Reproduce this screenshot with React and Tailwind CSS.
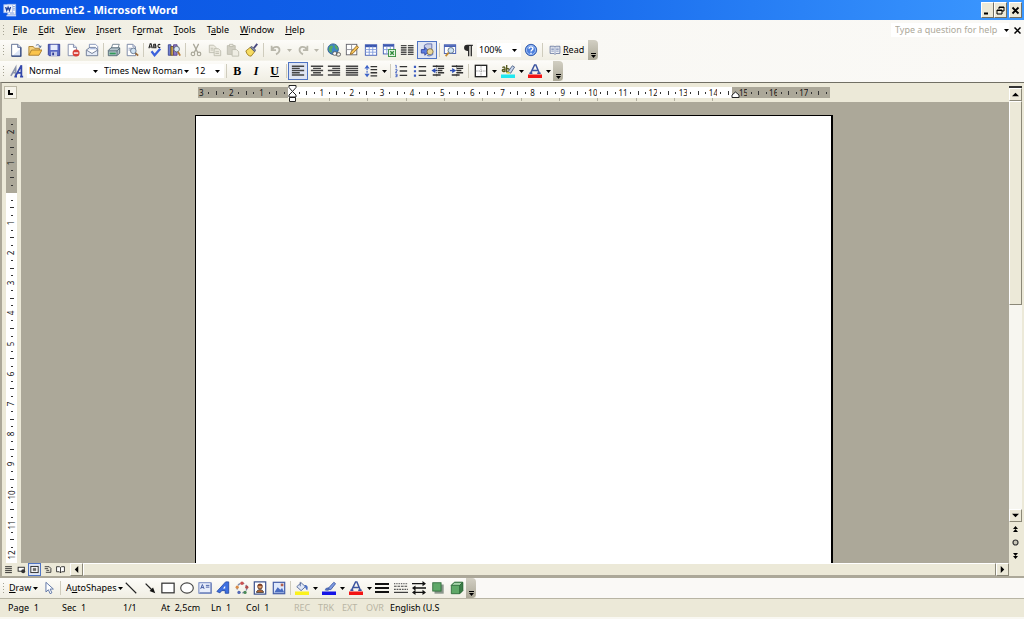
import clsx from 'clsx';

const G = '#a9a799';
const B = '#3a56b0';

const icons = {
  word: (
    <>
      <rect x="5.5" y="1.5" width="9" height="12" fill="#fff" stroke="#9db7ea" />
      <path d="M11.500 4h2M11.500 6h2M11.500 8h2M8 11.500h5" stroke="#6f8fd0" />
      <rect x="1" y="2" width="10" height="9" fill="#f2f6fe" stroke="#a9c1f0" />
      <path d="M3 4.500l1.300 4 1.500-3.600 1.500 3.600 1.400-4" fill="none" stroke="#1d3f9c" strokeWidth="1.500" />
      <path d="M4 14.500h11" stroke="#cfdcf7" strokeWidth="1.500" />
    </>
  ),
  newDoc: (
    <>
      <path d="M3 1.500h7l3.500 3.500v10H3z" fill="#fff" stroke="#53638c" />
      <path d="M4 14.500l9-8v8z" fill="#dce5f6" />
      <path d="M10 1.500V5h3.500" fill="#cdd8ee" stroke="#53638c" />
      <path d="M13.500 5v10H3" fill="none" stroke="#2f4680" strokeWidth="1.400" />
    </>
  ),
  open: (
    <>
      <path d="M1 14V4h5l1.500 2H13v3" fill="#f6d27a" stroke="#a6792a" />
      <path d="M1 14l3-6h12l-3.500 6z" fill="#fbc44b" stroke="#a6792a" />
      <path d="M9 3c2-2 4-1 5 1.500M12.300 4.200l2 .8.600-2" fill="none" stroke="#3d5a8f" />
    </>
  ),
  save: (
    <>
      <path d="M1.500 1.500h13v13h-12l-1-1z" fill="#5868c4" stroke="#2f3a94" />
      <rect x="4" y="2" width="8" height="6" fill="#e8edfb" />
      <rect x="4.500" y="10" width="7" height="5" fill="#c3c9e6" />
      <rect x="6" y="11" width="2" height="3" fill="#2f3a94" />
    </>
  ),
  permission: (
    <>
      <path d="M2.500 1.500h6L12 5v9.500H2.500z" fill="#fff" stroke="#7b87a6" />
      <path d="M8.500 1.500V5H12" fill="#dbe2f2" stroke="#7b87a6" />
      <circle cx="11.500" cy="11.500" r="4" fill="#d8403a" />
      <path d="M9 11.500h5" stroke="#fff" strokeWidth="1.600" />
    </>
  ),
  mail: (
    <>
      <path d="M5 1.500h7l2.500 2.500v6H5z" fill="#fff" stroke="#7d8db5" />
      <path d="M1.500 8l4-3h6.500l2.500 3v6.500h-13z" fill="#e5ebf7" stroke="#66748f" />
      <path d="M1.500 8l6.500 4 6.500-4" fill="#fff" stroke="#66748f" />
      <path d="M6 6h6" stroke="#8fa3d0" />
    </>
  ),
  print: (
    <>
      <path d="M5 6l1.500-4.500H14L12.500 6z" fill="#fff" stroke="#6c7e8c" />
      <path d="M1.500 8.500l3-3h10v6l-3 3h-10z" fill="#b7c6cc" stroke="#4d6370" />
      <path d="M1.500 9h10l3-3M11.500 9v5" fill="none" stroke="#4d6370" />
      <path d="M3 12h7" stroke="#2f9a58" strokeWidth="2" />
    </>
  ),
  preview: (
    <>
      <path d="M2.500 1.500h6.500L12 4.500v10H2.500z" fill="#fff" stroke="#6f7e9e" />
      <path d="M9 1.500v3h3M4 6h4M4 8h3" fill="none" stroke="#8a98b8" />
      <circle cx="9.500" cy="9" r="3.200" fill="#cfe2f2" stroke="#64738a" />
      <path d="M12 11.500l3 3" stroke="#9a6b3a" strokeWidth="2" />
    </>
  ),
  spelling: (
    <>
      <path d="M1 6l1.500-5h1L5 6M1.500 4.500h3M6.500 1v5M6.500 1.500h2v2h-2M6.500 3.500h2.500v2H6.500M14 2c-3-2-4 4 0 3" fill="none" stroke="#222" strokeWidth="1.200" />
      <path d="M4 9.500l3.500 4.500L14 6.500" fill="none" stroke="#3c62dc" strokeWidth="2.600" />
    </>
  ),
  research: (
    <>
      <path d="M1.500 2h3v12h-3z" fill="#6f7fd2" stroke="#3b4690" />
      <path d="M4.500 4h3v10h-3z" fill="#c9a24c" stroke="#6d5420" />
      <path d="M7.500 2h4v12h-4z" fill="#8d78c4" stroke="#54408a" />
      <circle cx="11" cy="7" r="3.200" fill="#d9e8f5" stroke="#59616f" />
      <path d="M12.500 10l2.500 4.500" stroke="#b5772e" strokeWidth="2" />
    </>
  ),
  cut: (
    <>
      <path d="M5 1l5 10M11 1L6 11" stroke={G} strokeWidth="1.400" />
      <circle cx="4.500" cy="12.500" r="2" fill="none" stroke={G} strokeWidth="1.300" />
      <circle cx="11.500" cy="12.500" r="2" fill="none" stroke={G} strokeWidth="1.300" />
    </>
  ),
  copy: (
    <>
      <path d="M1.500 2.500h5L9 5v6H1.500z" fill="#eceadf" stroke="#bdbbae" />
      <path d="M7 6.500h5L14.500 9v5.500H7z" fill="#eceadf" stroke="#bdbbae" />
      <path d="M3 6h3M3 8h3M8.500 10h4M8.500 12h4" stroke="#bdbbae" />
    </>
  ),
  paste: (
    <>
      <path d="M1.500 3h9v10h-9z" fill="#d0cec2" stroke="#bdbbae" />
      <path d="M4 1.500h4v2.500H4z" fill="#eceadf" stroke="#bdbbae" />
      <path d="M7 7.500h5L14.500 10v5H7z" fill="#efede3" stroke="#bdbbae" />
    </>
  ),
  painter: (
    <>
      <path d="M1 9l5-4 5 5-4 5c-3 0-5-2-6-6z" fill="#f7dc62" stroke="#9c7a1c" />
      <path d="M6 5l2-1 4 4-1 2z" fill="#8d93a8" stroke="#4f566e" />
      <path d="M10 6l4-5" stroke="#4a4a80" strokeWidth="2.200" />
    </>
  ),
  undo: <path d="M3 3v5h5M3.500 7.500C6 3 12 3.500 12 8c0 3-2 4-4 5" fill="none" stroke="#b9b7ab" strokeWidth="2" />,
  redo: <path d="M13 3v5H8M12.500 7.500C10 3 4 3.500 4 8c0 3 2 4 4 5" fill="none" stroke="#b9b7ab" strokeWidth="2" />,
  link: (
    <>
      <circle cx="7" cy="7" r="6" fill="#3f86c8" stroke="#28598f" />
      <path d="M3 4c3-3 5 0 3 2s1 3-1 5c-3-1-4-4-2-7zM9 2c3 1 4 4 3 6-2-1-4-3-3-6z" fill="#58ab62" />
      <rect x="6.500" y="10" width="5" height="4" rx="2" fill="#fff" stroke="#555" />
      <rect x="10.500" y="11" width="5" height="4" rx="2" fill="none" stroke="#555" />
    </>
  ),
  tables: (
    <>
      <rect x="1.500" y="1.500" width="12" height="12" fill="#fff" stroke="#5e5e66" />
      <path d="M1.500 7.500h12M7.500 1.500v12" stroke="#8b8b93" />
      <path d="M6 13l1-3 6.500-7 2 2L9 12z" fill="#f4c35a" stroke="#93661e" />
    </>
  ),
  table: (
    <>
      <rect x="1.500" y="2" width="13" height="12" fill="#fff" stroke={B} />
      <path d="M1.500 3.500h13" stroke={B} strokeWidth="2.600" />
      <path d="M1.500 7.500h13M1.500 10.500h13M6 4v10M10 4v10" stroke="#7f9adb" />
    </>
  ),
  excel: (
    <>
      <rect x="1.500" y="1.500" width="12" height="11" fill="#fff" stroke={B} />
      <path d="M1.500 3h12" stroke={B} strokeWidth="2.400" />
      <path d="M1.500 7.500h6M5.500 4v8M9.500 4v3" stroke="#7f9adb" />
      <rect x="7.500" y="7.500" width="8" height="8" fill="#e7f5e5" stroke="#2f8a3a" />
      <path d="M9.500 9.500l4 4M13.500 9.500l-4 4" stroke="#2f8a3a" strokeWidth="1.600" />
    </>
  ),
  columns: (
    <path
      d="M1 3h6.500M1 5.500h6.500M1 8h6.500M1 10.500h6.500M1 13h6.500M9 3h6.500M9 5.500h6.500M9 8h6.500M9 10.500h6.500M9 13h6.500"
      stroke="#4b4b4b"
      strokeWidth="1.700"
    />
  ),
  drawing: (
    <>
      <path d="M5 2.500l3-1.500h5.500v5.500l-2.500 2H5z" fill="#c9cfe8" stroke="#5b6cae" />
      <path d="M1.500 7.500h4V5l5 4.500-5 4.500v-2.500h-4z" fill="#5b7ce0" stroke="#33479b" />
      <circle cx="11.500" cy="10" r="3.500" fill="#e9d79a" stroke="#7a6a3c" />
      <path d="M8 14c3 1.500 6 0 7-2" fill="none" stroke="#6f86c6" strokeWidth="1.400" />
    </>
  ),
  docMap: (
    <>
      <rect x="1.500" y="2" width="13" height="10" fill="#fff" stroke={B} />
      <path d="M1.500 3.500h13" stroke={B} strokeWidth="2" />
      <circle cx="9" cy="8.500" r="3.300" fill="#cfe4f3" stroke="#5c6c82" />
      <path d="M6.500 11l-3.500 4" stroke="#c08a32" strokeWidth="2" />
    </>
  ),
  pilcrow: <path d="M13.500 2H7a3.500 3.500 0 000 7h1v6h1.500V3.500h1.500V15h1.500V3.500h1z" fill="#2a2a2a" />,
  help: (
    <>
      <circle cx="8" cy="8" r="6.500" fill="#4d80dd" stroke="#2d57a8" />
      <circle cx="8" cy="8" r="5.200" fill="none" stroke="#a9c5f5" />
      <path d="M5.800 6.500c0-3 4.600-2.600 4.400 0C10 8 8 8 8 9.800M8 11v1.600" fill="none" stroke="#fff" strokeWidth="1.600" />
    </>
  ),
  book: (
    <>
      <path d="M1.500 3h5.500l1 1 1-1h5.500v9.500H9.500L8 14l-1.500-1.500h-5z" fill="#fff" stroke="#4b5f8d" />
      <path d="M8 4v9M3 5.500h3.500M3 7.500h3.500M3 9.500h3.500M9.500 5.500H13M9.500 7.500H13M9.500 9.500H13" stroke="#5d73a5" />
    </>
  ),
  styles: (
    <>
      <path d="M1 13.500L6.500 4v9M3 10h4" fill="none" stroke="#8a93ab" strokeWidth="1.800" />
      <path d="M6 14.500L13 1.500v13M8.500 10h4.500M5 14.500h3M11.500 14.500H15" fill="none" stroke="#3347ab" strokeWidth="2" />
    </>
  ),
  alignLeft: <path d="M1 2.500h14M1 5h9M1 7.500h14M1 10h9M1 12.500h14" stroke="#444" strokeWidth="1.700" />,
  alignCenter: <path d="M1 2.500h14M3.500 5h9M1 7.500h14M3.500 10h9M1 12.500h14" stroke="#444" strokeWidth="1.700" />,
  alignRight: <path d="M1 2.500h14M6 5h9M1 7.500h14M6 10h9M1 12.500h14" stroke="#444" strokeWidth="1.700" />,
  justify: <path d="M1 2.500h14M1 5h14M1 7.500h14M1 10h14M1 12.500h14" stroke="#444" strokeWidth="1.700" />,
  spacing: (
    <>
      <path d="M7.500 3H15M7.500 6.500H15M7.500 10H15M7.500 13.500H15" stroke="#333" strokeWidth="1.500" />
      <path d="M3.500 2v12" stroke="#3d63c8" strokeWidth="1.300" strokeDasharray="2 1" />
      <path d="M.5 5l3-4 3 4zM.5 11l3 4 3-4z" fill="#3d63c8" />
    </>
  ),
  numbers: (
    <>
      <path d="M6.500 3H15M6.500 8H15M6.500 13H15" stroke="#333" strokeWidth="1.500" />
      <path d="M1.500 1.500h1V5M1.500 6.500h2v1.500l-2 1.500h2M1.500 11.500h2v3h-2M2 13h1.500" fill="none" stroke="#3d5cc0" />
    </>
  ),
  bullets: (
    <>
      <path d="M6.500 3H15M6.500 8H15M6.500 13H15" stroke="#333" strokeWidth="1.500" />
      <path d="M1 2h2.500v2.500H1zM1 7h2.500v2.500H1zM1 12h2.500v2.500H1z" fill="#3d5cc0" />
    </>
  ),
  outdent: (
    <>
      <path d="M2 2.500h13M8 5h7M8 7.500h5M8 10h7M2 12.500h9" stroke="#333" strokeWidth="1.700" />
      <path d="M5 4.500v6l-4.500-3z" fill="#2d4eb5" />
      <path d="M4 7.500h3.500" stroke="#2d4eb5" strokeWidth="1.500" />
      <path d="M6.500 1v14" stroke="#333" strokeWidth="1.200" strokeDasharray="1 1" />
    </>
  ),
  indent: (
    <>
      <path d="M2 2.500h13M8 5h7M8 7.500h5M8 10h7M2 12.500h9" stroke="#333" strokeWidth="1.700" />
      <path d="M2.500 4.500v6l4.500-3z" fill="#2d4eb5" />
      <path d="M0 7.500h4" stroke="#2d4eb5" strokeWidth="1.500" />
      <path d="M7.500 1v14" stroke="#333" strokeWidth="1.200" strokeDasharray="1 1" />
    </>
  ),
  border: (
    <>
      <rect x="1.500" y="1.500" width="13" height="13" fill="#fff" stroke="#222" strokeWidth="1.500" />
      <path d="M8 2v12M2 8h12" stroke="#777" strokeDasharray="1 1" />
    </>
  ),
  highlight: (
    <>
      <path d="M1.500 4c3-1.500 3.500 0 3 5M4.500 6c-4 0-4 3 0 2.500M6.500 1v8c4 1 4-5 0-3.500" fill="none" stroke="#55591c" strokeWidth="1.500" />
      <path d="M8 9l5-7 2.500 1.500-4.500 7z" fill="#c9d6ea" stroke="#4b5f84" />
      <path d="M6 10.500l2-2 2.500 1.500-1.500 1z" fill="#d8d23a" />
      <rect x="0" y="12" width="16" height="4" fill="#20e8f0" />
    </>
  ),
  fontColor: (
    <>
      <path d="M3 10.500L7.500 1h1.500l4 9.500M5 7.500h6M1.500 10.500H5M10.500 10.500h4" fill="none" stroke="#3d55a0" strokeWidth="1.700" />
      <rect x="0" y="12" width="16" height="4" fill="#f21414" />
    </>
  ),
  pointer: <path d="M4.500 1.500v11l2.800-2.500 2 4.500 2-1-2-4.300H13z" fill="#fff" stroke="#50699f" />,
  line: <path d="M2 2l12 12" stroke="#222" strokeWidth="1.300" />,
  arrow: (
    <>
      <path d="M3 3l7 7" stroke="#222" strokeWidth="1.500" />
      <path d="M14 14L7.500 11.500 11.500 7.500z" fill="#111" />
    </>
  ),
  rect: <rect x="1" y="2.500" width="14" height="11" fill="#fff" stroke="#333" strokeWidth="1.400" />,
  oval: <ellipse cx="8" cy="8" rx="7.200" ry="5.800" fill="#fff" stroke="#444" strokeWidth="1.300" />,
  textbox: (
    <>
      <rect x="1" y="2" width="14" height="12" fill="#e8eefb" stroke="#6078b8" />
      <path d="M3 9l2-5 2 5M3.500 7.500h3M9 5h4M9 7h4" fill="none" stroke="#3a539d" />
      <path d="M2 13.500h13v-11" fill="none" stroke="#6f83bb" strokeWidth="1.500" />
    </>
  ),
  wordArt: (
    <>
      <path d="M1 12L11 1h3.500v13h-4v-3H6.500l-2 2.500z" fill="#3c6fe0" stroke="#264ba8" />
      <path d="M8 8.500l2.500-3v3z" fill="#fff" />
    </>
  ),
  diagram: (
    <>
      <circle cx="8" cy="8" r="5.500" fill="none" stroke="#7d86a8" strokeWidth="1.500" strokeDasharray="3 2" />
      <circle cx="8" cy="2.500" r="2" fill="#c95151" />
      <circle cx="2.500" cy="7" r="1.800" fill="#d98a45" />
      <circle cx="13.500" cy="7" r="1.800" fill="#b34c4c" />
      <circle cx="4.500" cy="13" r="1.800" fill="#5368b5" />
      <circle cx="11.500" cy="13" r="1.800" fill="#4a8a57" />
    </>
  ),
  clipArt: (
    <>
      <rect x="1.500" y="1" width="13" height="14" fill="#fff" stroke="#3f5590" strokeWidth="1.400" />
      <path d="M4 13c0-4 8-4 8 0z" fill="#c06a34" stroke="#333" />
      <circle cx="8" cy="6.500" r="2.600" fill="#e0a06c" stroke="#5c2f1c" />
      <path d="M5 5.500c1-3 5-3 6 0z" fill="#7c3b22" />
    </>
  ),
  picture: (
    <>
      <rect x="1.500" y="1.500" width="13" height="13" fill="#dfe9fb" stroke="#4760a8" strokeWidth="1.400" />
      <path d="M2.500 13l4-6 3 3 2-2 2.500 5z" fill="#4a6cc0" />
      <path d="M10 3h3v3h-3z" fill="#b3614d" />
    </>
  ),
  fill: (
    <>
      <path d="M2 6.500l5-4.500 5 4.500-5 4.500z" fill="#dfe7f7" stroke="#4e6396" />
      <path d="M6 1v5" stroke="#4e6396" />
      <path d="M11 4.500c4 0 4 3 3 6-2-1-1.500-3-3-4z" fill="#4a6fc4" />
      <rect x="0" y="12" width="16" height="4" fill="#fbf21d" />
    </>
  ),
  lineColor: (
    <>
      <path d="M3 10.500c1-3 3-3.500 5-3l1.500 1.500c-1 2-4 2.500-6.500 1.500z" fill="#5570b8" />
      <path d="M7 8.500L13.500 1.500l2 1.500L10 10z" fill="#7e9be0" stroke="#3b57a5" />
      <rect x="0" y="12" width="16" height="4" fill="#1414e6" />
    </>
  ),
  lineStyle: <path d="M0 3.500h16M0 8h16M0 12.500h16" stroke="#111" strokeWidth="2.200" />,
  dashStyle: (
    <>
      <path d="M0 3h16" stroke="#555" strokeDasharray="1 1" strokeWidth="1.300" />
      <path d="M0 6h16" stroke="#444" strokeDasharray="3 1" strokeWidth="1.300" />
      <path d="M0 9.500h16" stroke="#555" strokeDasharray="2 1" strokeWidth="1.300" />
      <path d="M0 13h16" stroke="#333" strokeWidth="1.300" />
    </>
  ),
  arrowStyle: (
    <>
      <path d="M0 3h14M2 8h14M2 13h12" stroke="#111" strokeWidth="1.600" />
      <path d="M12 0l4 3-4 3zM4 5L0 8l4 3zM4 10l-4 3 4 3zM12 10l4 3-4 3z" fill="#111" />
    </>
  ),
  shadow: (
    <>
      <rect x="4" y="4" width="10.500" height="10.500" fill="#8c978d" />
      <rect x="2" y="2" width="9.500" height="9.500" fill="#5fa868" stroke="#2f6b3a" />
    </>
  ),
  cube: (
    <>
      <path d="M1.500 5l3.500-3.500h9.500V11L11 14.500H1.500z" fill="#5fa868" stroke="#2f6b3a" />
      <path d="M1.500 5l3.500-3.500h9.500L11 5z" fill="#a5d3a8" stroke="#2f6b3a" />
      <path d="M11 5v9.500l3.500-3.500V1.500z" fill="#3c7d48" stroke="#2f6b3a" />
    </>
  ),
  viewNormal: <path d="M2 3h12M2 6.500h12M2 10h12M2 13.500h12" stroke="#222" strokeWidth="1.600" />,
  viewWeb: (
    <>
      <rect x="2" y="4" width="11" height="7" fill="#fff" stroke="#222" strokeWidth="1.600" />
      <circle cx="11" cy="11" r="3.500" fill="#333" />
    </>
  ),
  viewPrint: (
    <>
      <rect x="1.500" y="2.500" width="13" height="11" fill="#fff" stroke="#222" strokeWidth="1.600" />
      <path d="M5 6h6M5 8h6M5 10h6" stroke="#333" strokeWidth="1.300" />
    </>
  ),
  viewOutline: <path d="M3 3h8l3 3v7H5M3 6.500h6M6 9.500h5" fill="none" stroke="#333" strokeWidth="1.600" />,
  viewReading: <path d="M1 3h5l2 1.500L10 3h5v9h-5l-2 2-2-2H1zM8 4.500V14" fill="#fff" stroke="#222" strokeWidth="1.500" />,
};

function Icon({ name, className = 'h-[14px] w-[14px]' }) {
  return (
    <svg viewBox="0 0 16 16" className={clsx('shrink-0', className)} aria-hidden="true">
      {icons[name]}
    </svg>
  );
}

function Caret({ className = 'text-black' }) {
  return (
    <svg viewBox="0 0 5 3" className={clsx('h-[3px] w-[5px] shrink-0', className)} aria-hidden="true">
      <path d="M0 0h5L2.500 3z" fill="currentColor" />
    </svg>
  );
}

function Grip() {
  return (
    <div className="flex w-[7px] shrink-0 flex-col items-center justify-center gap-[2px]">
      {[0, 1, 2, 3].map((i) => (
        <span key={i} className="h-px w-px bg-[#a5a292]" />
      ))}
    </div>
  );
}

function Sep() {
  return (
    <div className="flex w-1 shrink-0 items-center justify-center">
      <span className="h-3.5 w-px bg-[#cfccbd]" />
    </div>
  );
}

function Tool({ name, label, active }) {
  return (
    <button
      type="button"
      aria-label={label}
      className={clsx(
        'flex flex-1 items-center justify-center',
        active && 'border border-[#4f74c4] bg-[#dfe5f3]'
      )}
    >
      <Icon name={name} />
    </button>
  );
}

// A run of equally wide tool buttons
function Group({ className, items, active }) {
  return (
    <div className={clsx('flex shrink-0 py-px', className)}>
      {items.map((name) => (
        <Tool key={name} name={name} label={name} active={name === active} />
      ))}
    </div>
  );
}

function Split({ name, disabled }) {
  return (
    <button type="button" aria-label={name} className="flex w-[27px] shrink-0 items-center gap-1 pl-[3px]">
      <Icon name={name} />
      <Caret className={disabled ? 'text-[#b9b7ab]' : 'text-black'} />
    </button>
  );
}

function Combo({ label, value, options, className }) {
  return (
    <div className={clsx('my-[3px] flex shrink-0 items-center bg-white pr-1 pl-[2px]', className)}>
      <select aria-label={label} defaultValue={value} className="min-w-0 flex-1 appearance-none bg-transparent outline-none">
        {options.map((o) => (
          <option key={o}>{o}</option>
        ))}
      </select>
      <Caret />
    </div>
  );
}

function More() {
  return (
    <button
      type="button"
      aria-label="Toolbar options"
      className="flex w-2.5 shrink-0 flex-col items-center justify-end gap-px rounded-r-sm bg-linear-to-b from-[#d2cfc3] to-[#aca998] pb-[2px]"
    >
      <span className="h-px w-[5px] bg-black" />
      <Caret />
    </button>
  );
}

function Toolbar({ children }) {
  return (
    <div className="flex h-5 w-fit bg-linear-to-b from-[#fdfcf9] to-[#f0eee3]">{children}</div>
  );
}

function WinButton({ label, children }) {
  return (
    <button
      type="button"
      aria-label={label}
      className="flex h-4 w-[13px] items-center justify-center border border-t-white border-r-[#716f64] border-b-[#716f64] border-l-white bg-[#ece9d8]"
    >
      <svg viewBox="0 0 9 9" className="h-[9px] w-[9px]" fill="none" stroke="#000">
        {children}
      </svg>
    </button>
  );
}

const arrows = {
  up: 'M0 6l4-4 4 4z',
  down: 'M0 2l4 4 4-4z',
  left: 'M6 0L2 4l4 4z',
  right: 'M2 0l4 4-4 4z',
};

function ScrollButton({ dir }) {
  return (
    <button
      type="button"
      aria-label={`Scroll ${dir}`}
      className="flex h-[13px] w-[13px] shrink-0 items-center justify-center border border-t-white border-r-[#8b8878] border-b-[#8b8878] border-l-white bg-[#ece9d8]"
    >
      <svg viewBox="0 0 8 8" className="h-[7px] w-[7px]">
        <path d={arrows[dir]} fill="#000" />
      </svg>
    </button>
  );
}

// Mark for each quarter of a centimetre, counted from the margin
function mark(q) {
  if (q === 0) return '';
  if (q % 4 === 0) return Math.abs(q / 4);
  return q % 2 === 0 ? 'line' : 'dot';
}

function HorizontalRuler() {
  const quarters = Array.from({ length: 84 }, (_, i) => i - 12);
  return (
    <div className="relative mx-auto w-[633px] pt-1">
      <div className="flex h-[11px]">
        {quarters.map((q) => {
          const m = mark(q);
          return (
            <span
              key={q}
              className={clsx(
                'flex min-w-0 flex-1 items-center justify-center text-[8px] leading-none text-[#111]',
                q < 0 || q > 58 ? 'bg-[#aca899]' : 'bg-white'
              )}
            >
              {m === 'dot' && <i className="h-[2px] w-px bg-[#333]" />}
              {m === 'line' && <i className="h-1 w-px bg-[#333]" />}
              {typeof m === 'number' && m}
            </span>
          );
        })}
      </div>
      <div className="ml-[94px] flex h-[3px] w-[422px]">
        {Array.from({ length: 11 }, (_, i) => (
          <span key={i} className="flex-1 border-r border-[#b3b0a0]" />
        ))}
      </div>
      <svg viewBox="0 0 9 18" className="absolute top-[2px] left-[90px] h-[18px] w-[9px]" fill="#fff" stroke="#222">
        <path d="M1 .5h7v2L4.500 6.500 1 2.500zM4.500 6.500L8 10v2H1v-2zM1.500 12.500h6v4h-6z" />
      </svg>
      <svg viewBox="0 0 9 7" className="absolute top-[8px] left-[533px] h-[7px] w-[9px]" fill="#fff" stroke="#222">
        <path d="M1 6.500h7V4L4.500 1 1 4z" />
      </svg>
    </div>
  );
}

function VerticalRuler() {
  const quarters = Array.from({ length: 58 }, (_, i) => i - 9);
  return (
    <div className="flex w-[19px] shrink-0 flex-col bg-[#ece9d8] pt-4 pr-1 pl-1">
      <div className="h-[3px] shrink-0 bg-[#aca899]" />
      <div className="flex flex-1 flex-col bg-white pb-1">
        {quarters.map((q) => {
          const m = mark(q);
          return (
            <span
              key={q}
              className={clsx(
                'flex min-h-0 flex-1 items-center justify-center text-[8px] leading-none text-[#111]',
                q < 0 && 'bg-[#aca899]',
                q === 0 && 'bg-linear-to-b from-[#aca899] from-50% to-white to-50%'
              )}
            >
              {m === 'dot' && <i className="h-px w-[2px] bg-[#333]" />}
              {m === 'line' && <i className="h-px w-1 bg-[#333]" />}
              {typeof m === 'number' && <span className="-rotate-90">{m}</span>}
            </span>
          );
        })}
      </div>
    </div>
  );
}

const menus = [
  ['', 'F', 'ile'],
  ['', 'E', 'dit'],
  ['', 'V', 'iew'],
  ['', 'I', 'nsert'],
  ['F', 'o', 'rmat'],
  ['', 'T', 'ools'],
  ['T', 'a', 'ble'],
  ['', 'W', 'indow'],
  ['', 'H', 'elp'],
];

const status = [
  ['Page  1', 'w-[54px]'],
  ['Sec  1', 'w-[61px]'],
  ['1/1', 'w-[38px]'],
  ['At  2,5cm', 'w-[50px]'],
  ['Ln  1', 'w-[35px]'],
  ['Col  1', 'w-[48px]'],
];

const modes = ['REC', 'TRK', 'EXT', 'OVR'];

export default function App() {
  return (
    <div className="flex h-screen flex-col overflow-hidden bg-[#ece9d8] font-['Noto_Sans','DejaVu_Sans',sans-serif] text-[9px] leading-3 text-black">
      {/* Title bar */}
      <header className="flex h-5 shrink-0 items-center bg-linear-to-r from-[#0a55e4] via-[#1464ea] to-[#3c98ff] pr-[2px] pl-[3px]">
        <Icon name="word" />
        <h1 className="ml-1 flex-1 text-[11px] leading-4 font-bold text-white">Document2 - Microsoft Word</h1>
        <WinButton label="Minimize">
          <path d="M1 7.500h4" strokeWidth="2" />
        </WinButton>
        <WinButton label="Restore">
          <path d="M3 3V1h5v4H6M3 1.500h5M1 4h5v4H1zM1 4.500h5" />
        </WinButton>
        <span className="w-[2px]" />
        <WinButton label="Close">
          <path d="M1.500 1.500l6 6M7.500 1.500l-6 6" strokeWidth="1.800" />
        </WinButton>
      </header>

      <div className="flex shrink-0 flex-col bg-linear-to-r from-[#efede0] via-[#f9f8f4] to-[#faf9f6] pb-px">
        {/* Menu bar */}
        <nav className="flex h-5">
          <Grip />
          {menus.map(([before, key, after]) => (
            <button key={before + key + after} type="button" className="pr-[5px] pl-[6px]">
              {before}
              <u>{key}</u>
              {after}
            </button>
          ))}
          <div className="my-[3px] ml-auto flex w-[118px] items-center bg-white">
            <input
              type="text"
              aria-label="Type a question for help"
              placeholder="Type a question for help"
              className="min-w-0 flex-1 bg-transparent pl-1 outline-none placeholder:text-[#aca899]"
            />
            <Caret />
          </div>
          <button type="button" aria-label="Close document" className="flex w-[15px] items-center justify-center pl-px">
            <svg viewBox="0 0 7 7" className="h-[7px] w-[7px]" stroke="#000" strokeWidth="1.500">
              <path d="M.5.5l6 6M6.500.5l-6 6" />
            </svg>
          </button>
        </nav>

        {/* Standard toolbar */}
        <Toolbar>
          <Grip />
          <Group className="w-[94px]" items={['newDoc', 'open', 'save', 'permission', 'mail']} />
          <Sep />
          <Group className="w-9" items={['print', 'preview']} />
          <Sep />
          <Group className="w-[38px]" items={['spelling', 'research']} />
          <Sep />
          <Group className="w-[74px]" items={['cut', 'copy', 'paste', 'painter']} />
          <Sep />
          <div className="flex w-[56px] px-px">
            <Split name="undo" disabled />
            <Split name="redo" disabled />
          </div>
          <Sep />
          <Group
            className="w-[112px]"
            items={['link', 'tables', 'table', 'excel', 'columns', 'drawing']}
            active="drawing"
          />
          <Sep />
          <Group className="w-9" items={['docMap', 'pilcrow']} />
          <Combo label="Zoom" value="100%" options={['100%', '75%', '50%']} className="w-[44px]" />
          <Group className="w-[19px]" items={['help']} />
          <Sep />
          <button type="button" className="flex w-11 items-center gap-[2px] pl-[5px]">
            <Icon name="book" className="h-3 w-3" />
            <span>
              <u>R</u>ead
            </span>
          </button>
          <More />
        </Toolbar>

        <div className="h-px" />

        {/* Formatting toolbar */}
        <Toolbar>
          <Grip />
          <Group className="w-5" items={['styles']} />
          <Combo label="Style" value="Normal" options={['Normal', 'Heading 1', 'Heading 2']} className="w-[75px]" />
          <Combo label="Font" value="Times New Roman" options={['Times New Roman', 'Arial']} className="w-[91px]" />
          <Combo label="Font size" value="12" options={['10', '12', '14']} className="w-[31px]" />
          <Sep />
          <div className="flex w-[56px] font-['Liberation_Serif',serif] text-[12px] font-bold">
            <button type="button" aria-label="Bold" className="flex-1">B</button>
            <button type="button" aria-label="Italic" className="flex-1 italic">I</button>
            <button type="button" aria-label="Underline" className="flex-1 underline">U</button>
          </div>
          <Sep />
          <Group
            className="w-[73px]"
            items={['alignLeft', 'alignCenter', 'alignRight', 'justify']}
            active="alignLeft"
          />
          <Split name="spacing" />
          <Sep />
          <Group className="w-[74px]" items={['numbers', 'bullets', 'outdent', 'indent']} />
          <Sep />
          <div className="flex px-px">
            <Split name="border" />
            <Split name="highlight" />
            <Split name="fontColor" />
          </div>
          <More />
        </Toolbar>
      </div>

      {/* Editor */}
      <main className="flex min-h-0 flex-1 border-t border-l-2 border-t-[#716f64] border-l-[#aca899]">
        <div className="flex min-w-0 flex-1 flex-col">
          <div className="flex h-[19px] shrink-0">
            <div className="w-[19px] pt-[3px] pl-[2px]">
              <button
                type="button"
                aria-label="Tab stop"
                className="flex h-[13px] w-[13px] items-center justify-center border border-[#bdb9a6] bg-[#f6f4ea]"
              >
                <svg viewBox="0 0 5 5" className="h-[5px] w-[5px]" fill="none" stroke="#000" strokeWidth="2">
                  <path d="M1 0v4h4" />
                </svg>
              </button>
            </div>
            <div className="flex-1 pr-[2px]">
              <HorizontalRuler />
            </div>
          </div>
          <div className="flex min-h-0 flex-1">
            <VerticalRuler />
            <div className="flex flex-1 justify-center bg-[#aca899] pt-[13px] pr-[2px]">
              <div
                role="textbox"
                aria-label="Document"
                className="w-[638px] border-t border-r-2 border-l border-black bg-white"
              />
            </div>
          </div>
          <div className="flex h-[13px] shrink-0">
            {['viewNormal', 'viewWeb', 'viewPrint', 'viewOutline', 'viewReading'].map((v) => (
              <button
                key={v}
                type="button"
                aria-label={v}
                className={clsx(
                  'flex w-[13px] items-center justify-center',
                  v === 'viewPrint' && 'border border-[#4f74c4] bg-[#dfe6f5]'
                )}
              >
                <Icon name={v} className="h-[9px] w-[9px]" />
              </button>
            ))}
            <span className="w-[3px]" />
            <ScrollButton dir="left" />
            <div className="flex-1 border border-t-white border-r-[#8b8878] border-b-[#aca899] border-l-white" />
            <ScrollButton dir="right" />
          </div>
        </div>

        {/* Vertical scroll bar */}
        <div className="mr-[2px] flex w-[13px] shrink-0 flex-col items-center">
          <div className="h-[5px] w-full shrink-0 border-b-2 border-[#333]" />
          <ScrollButton dir="up" />
          <div className="flex w-full flex-1 flex-col bg-[#f7f6f0]">
            <div className="h-1/2 w-full border border-t-white border-r-[#8b8878] border-b-[#8b8878] border-l-white bg-[#ece9d8]" />
          </div>
          <ScrollButton dir="down" />
          <button type="button" aria-label="Previous page" className="flex h-[14px] items-center">
            <svg viewBox="0 0 5 6" className="h-[6px] w-[5px]">
              <path d="M0 3l2.500-3L5 3zM0 6l2.500-3L5 6z" fill="#000" />
            </svg>
          </button>
          <button type="button" aria-label="Select browse object" className="flex h-[13px] items-center">
            <svg viewBox="0 0 7 7" className="h-[7px] w-[7px]">
              <circle cx="3.500" cy="3.500" r="2.500" fill="#c8c5b6" stroke="#333" strokeWidth="1.200" />
            </svg>
          </button>
          <button type="button" aria-label="Next page" className="flex h-[13px] items-center">
            <svg viewBox="0 0 5 6" className="h-[6px] w-[5px]">
              <path d="M0 0h5L2.500 3zM0 3h5L2.500 6z" fill="#000" />
            </svg>
          </button>
          <div className="h-[14px]" />
        </div>
      </main>

      {/* Drawing toolbar */}
      <div className="shrink-0 border-t-2 border-b border-t-[#aca899] border-b-[#b8b5a4] bg-[#faf9f6]">
        <Toolbar>
          <Grip />
          <button type="button" className="flex w-8 items-center gap-[2px] pl-[2px]">
            <span>
              <u>D</u>raw
            </span>
            <Caret />
          </button>
          <Group className="w-[19px]" items={['pointer']} />
          <Sep />
          <button type="button" className="flex w-[60px] items-center gap-px pl-1">
            <span>
              A<u>u</u>toShapes
            </span>
            <Caret />
          </button>
          <Group
            className="w-[166px]"
            items={['line', 'arrow', 'rect', 'oval', 'textbox', 'wordArt', 'diagram', 'clipArt', 'picture']}
          />
          <Sep />
          <Split name="fill" />
          <Split name="lineColor" />
          <Split name="fontColor" />
          <Group className="w-[93px]" items={['lineStyle', 'dashStyle', 'arrowStyle', 'shadow', 'cube']} />
          <More />
        </Toolbar>
      </div>

      {/* Status bar */}
      <footer className="flex h-5 shrink-0 items-center border-b-2 border-[#f9f8f2] pl-2 whitespace-pre">
        {status.map(([text, width]) => (
          <span key={text} className={clsx('shrink-0', width)}>
            {text}
          </span>
        ))}
        {modes.map((m) => (
          <span key={m} className="w-6 shrink-0 text-[#b9b5a4]">
            {m}
          </span>
        ))}
        <span>English (U.S</span>
      </footer>
    </div>
  );
}
